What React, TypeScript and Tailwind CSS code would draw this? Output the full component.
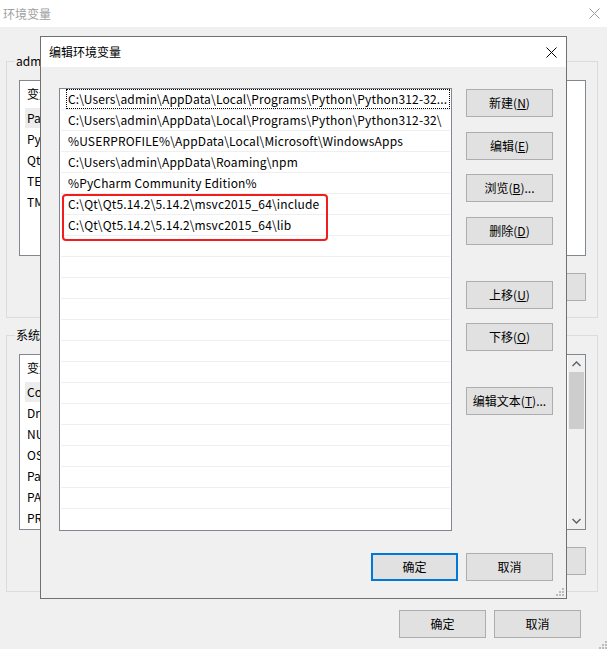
import React from "react";

function XIcon({ color }: { color: string }) {
  return (
    <svg width="11" height="11" viewBox="0 0 11 11">
      <path d="M0.5 0.5 L10.5 10.5 M10.5 0.5 L0.5 10.5" stroke={color} strokeWidth="1" fill="none" />
    </svg>
  );
}

function Grip() {
  return (
    <svg width="8" height="8" viewBox="0 0 8 8">
      <rect x="6" y="0" width="2" height="2" fill="#bcbcbc" />
      <rect x="3" y="3" width="2" height="2" fill="#bcbcbc" />
      <rect x="6" y="3" width="2" height="2" fill="#bcbcbc" />
      <rect x="0" y="6" width="2" height="2" fill="#bcbcbc" />
      <rect x="3" y="6" width="2" height="2" fill="#bcbcbc" />
      <rect x="6" y="6" width="2" height="2" fill="#bcbcbc" />
    </svg>
  );
}

function Btn({ children, focused }: { children: React.ReactNode; focused?: boolean }) {
  return (
    <div
      className={
        focused
          ? "flex h-[28px] w-[87px] shrink-0 items-center justify-center border-2 border-[#0078d7] bg-[#e1e1e1] text-black"
          : "flex h-[28px] w-[87px] shrink-0 items-center justify-center border border-[#adadad] bg-[#e1e1e1] text-black"
      }
    >
      {children}
    </div>
  );
}

const userVars = ["Path", "PyCharm", "QtMsBuild", "TEMP", "TMP"];

const sysVars = ["ComSpec", "DriverData", "NUMBER", "OS", "Path", "PATHEXT", "PROCESSOR"];

const paths = [
  "C:\\Users\\admin\\AppData\\Local\\Programs\\Python\\Python312-32...",
  "C:\\Users\\admin\\AppData\\Local\\Programs\\Python\\Python312-32\\",
  "%USERPROFILE%\\AppData\\Local\\Microsoft\\WindowsApps",
  "C:\\Users\\admin\\AppData\\Roaming\\npm",
  "%PyCharm Community Edition%",
  "C:\\Qt\\Qt5.14.2\\5.14.2\\msvc2015_64\\include",
  "C:\\Qt\\Qt5.14.2\\5.14.2\\msvc2015_64\\lib",
];

function VarRow({ name, selected }: { name: string; selected?: boolean }) {
  return (
    <div className="flex h-[21px] items-center whitespace-nowrap">
      <div
        className={
          selected
            ? "ml-[5px] flex h-[20px] w-[30px] items-center overflow-hidden bg-[#ececec] pl-[2px]"
            : "ml-[5px] flex h-[20px] w-[30px] items-center overflow-hidden pl-[2px]"
        }
      >
        <span className="block w-[13px] overflow-hidden">{name}</span>
      </div>
    </div>
  );
}

export default function App() {
  const rows = Array.from({ length: 20 }, (_, i) => paths[i] ?? "");
  return (
    <div className="relative h-[649px] w-[607px] overflow-hidden bg-[#f0f0f0] font-['Noto_Sans_CJK_SC',sans-serif] text-[12px] leading-[16px] text-black">
      {/* background window title bar */}
      <div className="flex h-[27px] items-center justify-between bg-white pl-[3px] pr-[7px]">
        <span className="text-[#a0a0a0]">环境变量</span>
        <XIcon color="#9a9a9a" />
      </div>

      <div className="flex flex-col pl-[6px] pt-[34px]">
        {/* user variables group */}
        <div className="relative h-[257px] w-[592px] border border-[#dcdcdc] pl-[12px] pr-[11px] pt-[18px]">
          <span className="absolute left-[8px] top-[-9px] bg-[#f0f0f0] px-[1px]">admin</span>
          <div className="h-[176px] w-[567px] overflow-hidden border border-[#828790] bg-white">
            <div className="flex h-[26px] items-center whitespace-nowrap pl-[7px]">
              <span>变量</span>
            </div>
            {userVars.map((n, i) => (
              <VarRow key={n} name={n} selected={i === 0} />
            ))}
          </div>
          <div className="mt-[17px] flex justify-end gap-[8px]">
            <Btn>{""}</Btn>
          </div>
        </div>

        {/* system variables group */}
        <div className="relative mt-[17px] h-[257px] w-[592px] border border-[#dcdcdc] pl-[12px] pr-[11px] pt-[18px]">
          <span className="absolute left-[8px] top-[-9px] bg-[#f0f0f0] px-[1px]">系统变量</span>
          <div className="flex h-[176px] w-[567px] overflow-hidden border border-[#828790] bg-white">
            <div className="flex-1 overflow-hidden">
              <div className="flex h-[26px] items-center whitespace-nowrap pl-[7px]">
                <span>变量</span>
              </div>
              {sysVars.map((n, i) => (
                <VarRow key={n + i} name={n} selected={i === 0} />
              ))}
            </div>
            <div className="flex w-[17px] flex-col items-center bg-[#f0f0f0]">
              <div className="flex h-[17px] items-center justify-center">
                <svg width="9" height="6" viewBox="0 0 9 6">
                  <path d="M0.5 5 L4.5 1 L8.5 5" stroke="#606060" strokeWidth="1.4" fill="none" />
                </svg>
              </div>
              <div className="h-[57px] w-[15px] bg-[#cdcdcd]" />
              <div className="flex-1" />
              <div className="flex h-[17px] items-center justify-center">
                <svg width="9" height="6" viewBox="0 0 9 6">
                  <path d="M0.5 1 L4.5 5 L8.5 1" stroke="#606060" strokeWidth="1.4" fill="none" />
                </svg>
              </div>
            </div>
          </div>
          <div className="mt-[17px] flex justify-end gap-[8px]">
            <Btn>{""}</Btn>
          </div>
        </div>

        {/* bottom buttons */}
        <div className="mt-[18px] flex justify-end gap-[8px] pr-[26px]">
          <Btn>确定</Btn>
          <Btn>取消</Btn>
        </div>
      </div>
      <div className="absolute bottom-0 right-0">
        <Grip />
      </div>

      {/* dialog window */}
      <div className="absolute left-[40px] top-[36px] flex h-[563px] w-[527px] flex-col border border-[#707070] bg-[#f0f0f0]">
        <div className="flex h-[30px] items-center justify-between bg-white pl-[8px] pr-[9px]">
          <span>编辑环境变量</span>
          <XIcon color="#000000" />
        </div>
        <div className="flex pl-[18px] pr-[13px] pt-[21px]">
          <div className="relative h-[443px] w-[393px] border border-[#828790] bg-white">
            {rows.map((p, i) => (
              <div key={i} className="mx-[1px] flex h-[21px] border-b border-[#efefef] pl-[5px]">
                <div
                  className={
                    i === 0
                      ? "flex h-[20px] flex-1 items-center overflow-hidden whitespace-nowrap border border-dotted border-black pl-[1px] tracking-[0.15px]"
                      : "flex h-[20px] flex-1 items-center overflow-hidden whitespace-nowrap border border-transparent pl-[1px] tracking-[0.15px]"
                  }
                >
                  {p}
                </div>
              </div>
            ))}
            <div className="absolute left-[2px] top-[105px] h-[47px] w-[266px] rounded-[4px] border-2 border-[#f21c1c]" />
          </div>
          <div className="ml-[14px] flex flex-col pt-[1px]">
            <Btn>新建(<u>N</u>)</Btn>
            <div className="mt-[15px]">
              <Btn>编辑(<u>E</u>)</Btn>
            </div>
            <div className="mt-[14px]">
              <Btn>浏览(<u>B</u>)...</Btn>
            </div>
            <div className="mt-[15px]">
              <Btn>删除(<u>D</u>)</Btn>
            </div>
            <div className="mt-[36px]">
              <Btn>上移(<u>U</u>)</Btn>
            </div>
            <div className="mt-[14px]">
              <Btn>下移(<u>O</u>)</Btn>
            </div>
            <div className="mt-[36px]">
              <Btn>编辑文本(<u>T</u>)...</Btn>
            </div>
          </div>
        </div>
        <div className="mt-[22px] flex justify-end gap-[8px] pr-[13px]">
          <Btn focused>确定</Btn>
          <Btn>取消</Btn>
        </div>
        <div className="absolute bottom-[2px] right-[2px]">
          <Grip />
        </div>
      </div>
    </div>
  );
}
